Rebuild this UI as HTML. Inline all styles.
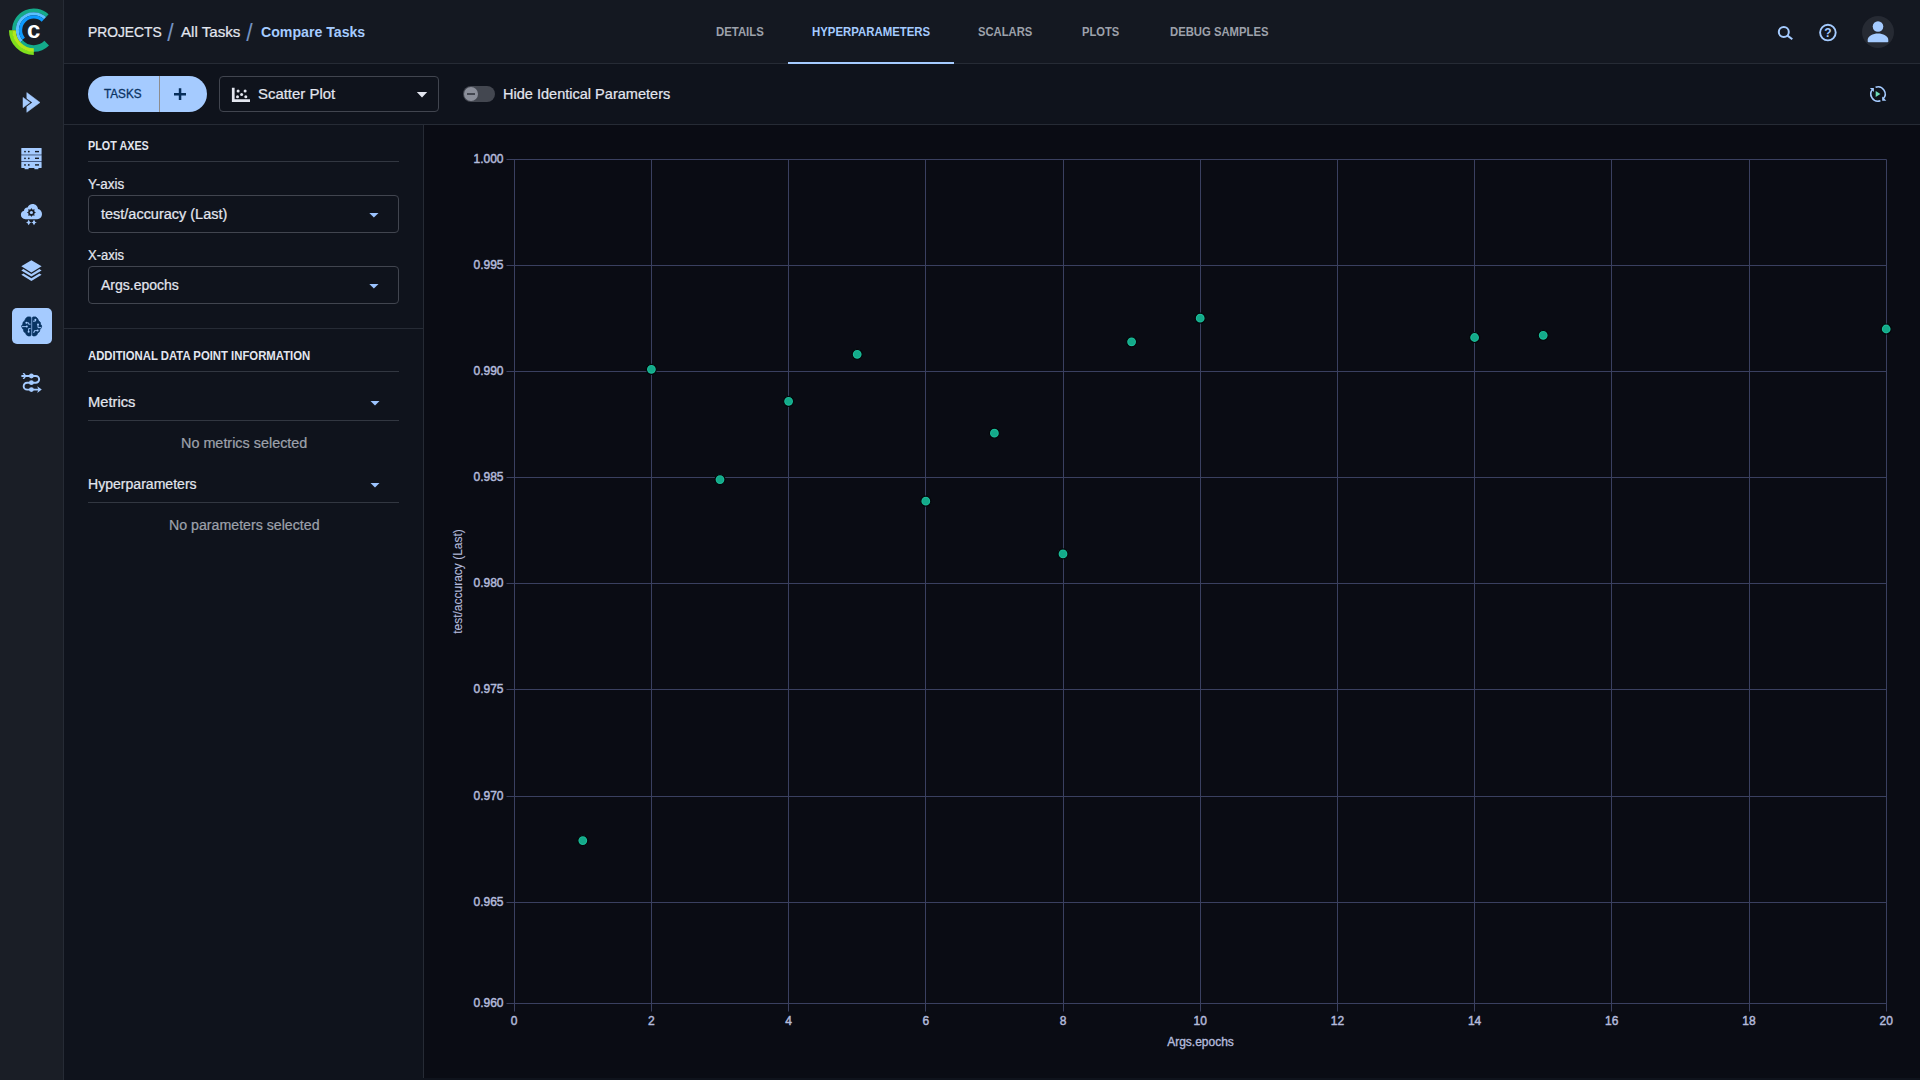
<!DOCTYPE html>
<html lang="en">
<head>
<meta charset="utf-8">
<title>Compare Tasks - Hyperparameters</title>
<style>
*{box-sizing:border-box;margin:0;padding:0}
html,body{width:1920px;height:1080px;overflow:hidden;background:#0f131c;}
body{font-family:"Liberation Sans",sans-serif;color:#e3e6ef;position:relative;}
.abs{position:absolute;white-space:nowrap;line-height:1;transform-origin:left top;transform:scaleX(var(--sx,1))}
#sidebar{position:absolute;left:0;top:0;width:64px;height:1080px;background:#1a1e26;border-right:1px solid #262b35}
#header{position:absolute;left:64px;top:0;width:1856px;height:64px;background:#141821;border-bottom:1px solid #262b35}
#toolbar{position:absolute;left:64px;top:64px;width:1856px;height:61px;background:#0f131c;border-bottom:1px solid #262b35}
#panel{position:absolute;left:64px;top:125px;width:360px;height:955px;background:#0f131c}
#pborder{position:absolute;left:423px;top:125px;width:1px;height:953px;background:#262b35}
#plot{position:absolute;left:424px;top:125px;width:1496px;height:953px;background:#0a0c14}
#underline{position:absolute;left:788px;top:62px;width:166px;height:2px;background:#a5cbff}
.hr{position:absolute;height:1px;background:#323741}
.sel{position:absolute;left:88px;width:311px;height:38px;border:1px solid #41454f;border-radius:4px}
svg{position:absolute;overflow:visible}
svg text{font-family:"Liberation Sans",sans-serif}
</style>
</head>
<body>
<div id="sidebar"></div>
<div id="header"></div>
<div id="toolbar"></div>
<div id="panel"></div>
<div id="plot"></div>
<div id="pborder"></div>


<!-- tabs -->
<div id="underline"></div>

<!-- toolbar -->
<div class="abs" id="pill" style="left:88px;top:76px;width:119px;height:36px;border-radius:18px;background:#a5cbff"></div>
<div class="abs" style="left:159px;top:76px;width:1px;height:36px;background:#8d8c8e"></div>

<div class="abs" style="left:219px;top:76px;width:220px;height:36px;border:1px solid #41454f;border-radius:4px"></div>

<div class="abs" style="left:463px;top:86px;width:32px;height:16px;border-radius:8px;background:#434750"></div>
<div class="abs" style="left:464px;top:87px;width:14px;height:14px;border-radius:7px;background:#8b8f9a"></div>
<div class="abs" style="left:467px;top:93px;width:8px;height:2px;background:#434750"></div>

<!-- left panel -->
<div class="hr" style="left:88px;top:161px;width:311px"></div>
<div class="sel" style="top:195px"></div>
<div class="sel" style="top:266px"></div>
<div class="hr" style="left:64px;top:328px;width:359px;background:#262b35"></div>
<div class="hr" style="left:88px;top:371px;width:311px"></div>
<div class="hr" style="left:88px;top:420px;width:311px"></div>
<div class="hr" style="left:88px;top:502px;width:311px"></div>


<!-- texts -->
<div class="abs" id="bc1" style="--sx:0.9215;left:87.58px;top:24.00px;font-size:15px;color:#e3e6ef;-webkit-text-stroke:0.22px currentColor">PROJECTS</div>
<div class="abs" id="bc2" style="--sx:1.0000;left:167.20px;top:21.70px;font-size:23px;color:#7592c2">/</div>
<div class="abs" id="bc3" style="--sx:1.0089;left:181.30px;top:24.00px;font-size:15px;color:#e3e6ef;-webkit-text-stroke:0.22px currentColor">All Tasks</div>
<div class="abs" id="bc4" style="--sx:1.0000;left:246.30px;top:21.70px;font-size:23px;color:#7592c2">/</div>
<div class="abs" id="bc5" style="--sx:0.9423;left:260.60px;top:24.00px;font-size:15px;color:#a5cbff;font-weight:bold">Compare Tasks</div>
<div class="abs" id="tab1" style="--sx:0.9477;left:716.10px;top:26.00px;font-size:12px;color:#9da1ab;font-weight:bold">DETAILS</div>
<div class="abs" id="tab2" style="--sx:0.9497;left:811.70px;top:26.00px;font-size:12px;color:#a5cbff;font-weight:bold">HYPERPARAMETERS</div>
<div class="abs" id="tab3" style="--sx:0.9362;left:977.70px;top:26.00px;font-size:12px;color:#9da1ab;font-weight:bold">SCALARS</div>
<div class="abs" id="tab4" style="--sx:0.9300;left:1082.30px;top:26.00px;font-size:12px;color:#9da1ab;font-weight:bold">PLOTS</div>
<div class="abs" id="tab5" style="--sx:0.9410;left:1169.80px;top:26.00px;font-size:12px;color:#9da1ab;font-weight:bold">DEBUG SAMPLES</div>
<div class="abs" id="tasks" style="--sx:0.9753;left:104.20px;top:88.00px;font-size:12px;color:#0b3363;-webkit-text-stroke:0.3px #0b3363">TASKS</div>
<div class="abs" id="scatter" style="--sx:0.9953;left:258.00px;top:86.00px;font-size:15px;color:#e3e6ef;-webkit-text-stroke:0.22px currentColor">Scatter Plot</div>
<div class="abs" id="hide" style="--sx:0.9691;left:502.63px;top:86.00px;font-size:15px;color:#e3e6ef;-webkit-text-stroke:0.22px currentColor">Hide Identical Parameters</div>
<div class="abs" id="plotaxes" style="--sx:0.8999;left:88.20px;top:140.00px;font-size:12px;color:#e3e6ef;font-weight:bold">PLOT AXES</div>
<div class="abs" id="yaxis" style="--sx:0.9598;left:88.30px;top:177.00px;font-size:14px;color:#e3e6ef;-webkit-text-stroke:0.22px currentColor">Y-axis</div>
<div class="abs" id="ysel" style="--sx:1.0338;left:101.10px;top:207.00px;font-size:14px;color:#e3e6ef;-webkit-text-stroke:0.22px currentColor">test/accuracy (Last)</div>
<div class="abs" id="xaxis" style="--sx:0.9281;left:88.30px;top:248.00px;font-size:14px;color:#e3e6ef;-webkit-text-stroke:0.22px currentColor">X-axis</div>
<div class="abs" id="xsel" style="--sx:0.9997;left:101.10px;top:278.00px;font-size:14px;color:#e3e6ef;-webkit-text-stroke:0.22px currentColor">Args.epochs</div>
<div class="abs" id="addl" style="--sx:0.9443;left:88.30px;top:350.00px;font-size:12px;color:#e3e6ef;font-weight:bold">ADDITIONAL DATA POINT INFORMATION</div>
<div class="abs" id="metrics" style="--sx:1.0496;left:88.05px;top:395.00px;font-size:14px;color:#e3e6ef;-webkit-text-stroke:0.22px currentColor">Metrics</div>
<div class="abs" id="nometrics" style="--sx:1.0277;left:181.27px;top:436.00px;font-size:14px;color:#9da1ab;-webkit-text-stroke:0.22px currentColor">No metrics selected</div>
<div class="abs" id="hyper" style="--sx:1.0042;left:88.10px;top:477.00px;font-size:14px;color:#e3e6ef;-webkit-text-stroke:0.22px currentColor">Hyperparameters</div>
<div class="abs" id="noparams" style="--sx:1.0127;left:169.19px;top:518.00px;font-size:14px;color:#9da1ab;-webkit-text-stroke:0.22px currentColor">No parameters selected</div>
<!-- ICONS OVERLAY -->
<svg id="icons" width="1920" height="1080" style="left:0;top:0" viewBox="0 0 1920 1080">
<!-- logo -->
<g id="logo" fill="none">
<path d="M13.95,30.20 A19.85,19.85 0 0 1 47.34,15.68" stroke="#14aa8a" stroke-width="3.7"/>
<path d="M21.58,41.21 A16.45,16.45 0 0 1 45.02,18.17" stroke="#5ac0ff" stroke-width="3.1"/>
<path d="M23.65,38.72 A13.25,13.25 0 0 1 42.84,20.51" stroke="#0d9aff" stroke-width="3.3"/>
<path d="M46.70,43.10 A18.25,18.25 0 0 1 20.24,42.41" stroke="#14aa8a" stroke-width="6.5"/>
<path d="M33.80,53.20 A23.0,23.0 0 0 1 10.80,30.20" stroke="#80e01c" stroke-width="3.7"/>
<path d="M33.80,49.95 A19.75,19.75 0 0 1 14.05,30.20" stroke="#b2e81c" stroke-width="3.5"/>
</g>
<text x="33.6" y="37.9" text-anchor="middle" font-size="24" font-weight="bold" fill="#ffffff">c</text>

<!-- nav 1: double arrow -->
<g id="nav1">
<path d="M26.8,92.6 L40,102.45 L26.8,112.3 Z" fill="#a5cbff" stroke="#a5cbff" stroke-width="0.5" stroke-linejoin="round"/>
<path d="M23,97.4 L30.1,102.5 L23,107.7 Z" fill="#a5cbff" stroke="#1a1e26" stroke-width="2.4" stroke-linejoin="miter"/>
<path d="M23,97.4 L30.1,102.5 L23,107.7 Z" fill="#a5cbff" stroke="#a5cbff" stroke-width="0.5" stroke-linejoin="round"/>
</g>

<!-- nav 2: servers -->
<g id="nav2" fill="#a5cbff">
<rect x="21.3" y="148" width="20.3" height="6.4" rx="0.6"/>
<rect x="21.3" y="154.4" width="20.3" height="1" fill="#7b9fd2"/>
<rect x="21.3" y="155.4" width="20.3" height="5.7"/>
<rect x="21.3" y="161.1" width="20.3" height="0.8" fill="#50699a"/>
<rect x="21.3" y="161.9" width="20.3" height="6.2" rx="0.6"/>
<rect x="24.6" y="168" width="4" height="1.2"/>
<rect x="34.4" y="168" width="4" height="1.2"/>
<g fill="#1a1e26">
<circle cx="25" cy="151.6" r="0.9"/><circle cx="28.8" cy="151.6" r="0.9"/><rect x="35" y="150.9" width="4" height="1.4"/>
<circle cx="25" cy="158.3" r="0.9"/><circle cx="28.8" cy="158.3" r="0.9"/><rect x="35" y="157.6" width="4" height="1.4"/>
<circle cx="25" cy="164.9" r="0.9"/><circle cx="28.8" cy="164.9" r="0.9"/><rect x="35" y="164.2" width="4" height="1.4"/>
</g>
</g>

<!-- nav 3: cloud gear -->
<g id="nav3">
<path d="M25.5,219.2 C22.6,219.2 20.9,217.2 20.9,214.8 C20.9,212.7 22.3,211.2 24,210.8 C24,208.6 25.8,207.2 27.6,207.4 C28.4,205.3 30.3,204 32.6,204 C35.6,204 37.8,206.2 38,209 C40.4,209.4 42,211.3 42,214 C42,217 39.9,219.2 37.2,219.2 Z" fill="#a5cbff"/>
<g fill="#1a1e26">
<circle cx="31.4" cy="212.5" r="3.1"/>
<path d="M31.4,207.9 l1.1,2 h-2.2z M31.4,217.1 l1.1,-2 h-2.2z M26.8,212.5 l2,1.1 v-2.2z M36,212.5 l-2,1.1 v-2.2z M28.15,209.25 l2.2,0.6 l-1.6,1.6z M34.65,209.25 l-2.2,0.6 l1.6,1.6z M28.15,215.75 l2.2,-0.6 l-1.6,-1.6z M34.65,215.75 l-2.2,-0.6 l1.6,-1.6z"/>
</g>
<circle cx="31.4" cy="212.5" r="1.6" fill="#a5cbff"/>
<path d="M28.7,219.8 L30,221.9 L31.6,222.5 L30,223.1 L28.7,225.2 L27.4,223.1 L25.8,222.5 L27.4,221.9 Z" fill="#a5cbff"/>
<path d="M34,219.8 L35.3,221.9 L36.9,222.5 L35.3,223.1 L34,225.2 L32.7,223.1 L31.1,222.5 L32.7,221.9 Z" fill="#a5cbff"/>
</g>

<!-- nav 4: layers -->
<g id="nav4" fill="#a5cbff">
<path d="M21.3,266.3 L31.4,260.2 L41.6,266.3 L31.4,272.4 Z"/>
<path d="M21.3,270.4 L23.4,269.1 L31.4,273.9 L39.4,269.1 L41.6,270.4 L31.4,276.6 Z"/>
<path d="M21.3,274.7 L23.4,273.4 L31.4,278.2 L39.4,273.4 L41.6,274.7 L31.4,280.9 Z"/>
</g>

<!-- nav 5: brain active -->
<g id="nav5">
<rect x="12" y="308" width="40" height="36" rx="5" fill="#a5cbff"/>
<g fill="#083463" stroke="#083463" stroke-width="0.7" stroke-linejoin="round">
<path d="M31.0,317.5 L30.2,316.9 L27.4,316.9 L25.7,318.6 L24.6,320.9 L23.0,322.3 L22.8,324.2 L21.5,326.0 L22.3,328.2 L23.4,329.6 L23.9,331.8 L25.6,333.1 L26.5,335.0 L28.2,335.9 L30.2,335.9 L31.0,335.3 Z"/>
<path d="M32.3,317.5 L33.1,316.9 L35.9,316.9 L37.6,318.6 L38.7,320.9 L40.3,322.3 L40.5,324.2 L41.8,326.0 L41.0,328.2 L39.9,329.6 L39.4,331.8 L37.7,333.1 L36.8,335.0 L35.1,335.9 L33.1,335.9 L32.3,335.3 Z"/>
</g>
<g stroke="#a5cbff" stroke-width="0.9" fill="none">
<path d="M26.2,322.8 H28.6 V324.2 H30.6"/>
<path d="M22,326.6 H26.6"/>
<path d="M30.6,328.6 H28.6 V331.6"/>
<path d="M33,321.2 H35.4 V320"/>
<path d="M38,324.8 V327.6 H41"/>
<path d="M33,332.2 H34.4 V330.6 H37.4"/>
</g>
<g fill="#a5cbff">
<circle cx="26.4" cy="322.8" r="1"/><circle cx="26.8" cy="326.6" r="1"/><circle cx="28.6" cy="331.8" r="1"/>
<circle cx="35.4" cy="319.8" r="1"/><circle cx="38" cy="324.6" r="1"/><circle cx="37.6" cy="330.6" r="1"/>
</g>
</g>

<!-- nav 6: pipelines -->
<g id="nav6">
<path d="M21.4,376 H35.8 A3.35,3.35 0 0 1 35.8,382.7 H27.1 A3.45,3.45 0 0 0 27.1,389.6 H40" fill="none" stroke="#a5cbff" stroke-width="1.9"/>
<circle cx="31.4" cy="376" r="2.4" fill="#a5cbff"/>
<circle cx="31.4" cy="382.7" r="2.4" fill="#a5cbff"/>
<circle cx="31.4" cy="389.6" r="2.4" fill="#a5cbff"/>
<path d="M37.2,386.3 L41.8,389.6 L37.2,392.9 L38.4,389.6 Z" fill="#a5cbff"/>
<path d="M22.6,373 L24.2,373 L26.6,376 L24.2,379 L22.6,379 L24.6,376 Z" fill="#a5cbff"/>
</g>

<!-- search -->
<g id="search" fill="none" stroke="#a5cbff" stroke-width="2">
<circle cx="1783.8" cy="31.9" r="5"/>
<path d="M1787.5,35.6 L1792.3,39.3" stroke-linecap="butt"/>
</g>
<!-- help -->
<circle cx="1827.9" cy="32.6" r="7.8" fill="none" stroke="#a5cbff" stroke-width="1.9"/>
<text x="1827.9" y="37" text-anchor="middle" font-size="12" font-weight="bold" fill="#a5cbff">?</text>
<!-- avatar -->
<circle cx="1878" cy="32" r="16" fill="#262a33"/>
<path d="M1868.5,42.2 Q1867.7,42.2 1867.7,41.4 V39.8 C1867.7,36 1873,33.5 1878,33.5 S1888.3,36 1888.3,39.8 V41.4 Q1888.3,42.2 1887.5,42.2 Z" fill="#a5cbff"/>
<circle cx="1878" cy="26.5" r="6.4" fill="#262a33"/>
<circle cx="1878" cy="26.5" r="5.3" fill="#a5cbff"/>
<!-- refresh -->
<g id="refresh" fill="none" stroke="#a5cbff" stroke-width="1.6">
<path d="M1875.57,87.33 A7.1,7.1 0 0 1 1883.02,99.02"/>
<path d="M1880.43,100.67 A7.1,7.1 0 0 1 1872.98,88.98"/>
</g>
<path d="M1882,97.2 L1886.2,97.2 L1886.2,100.9 L1882,100.9 Z" fill="none"/>
<path d="M1882.2,100.8 L1882.2,96.6 L1886.3,100.8 Z" fill="#a5cbff"/>
<path d="M1873.85,88 L1873.85,92 L1869.85,88 Z" fill="#a5cbff"/>
<path d="M1875.7,90.9 L1880.4,94 L1875.7,97.1 Z" fill="#6fdcb9"/>

<!-- plus -->
<path d="M174,92.9 H186 V95.4 H174 Z M178.8,88.2 H181.3 V100 H178.8 Z" fill="#062e5a"/>
<!-- carets -->
<path d="M416.8,92.1 H427.2 L422,97.4 Z" fill="#e3e6ef"/>
<g fill="#9cc4ff">
<path d="M369.3,212.9 H378.5 L373.9,217.5 Z"/>
<path d="M369.3,283.9 H378.5 L373.9,288.5 Z"/>
<path d="M370.5,400.9 H379.5 L375,405.4 Z"/>
<path d="M370.5,482.9 H379.5 L375,487.4 Z"/>
</g>
<!-- scatter icon -->
<g id="scicon" fill="#e3e6ef">
<path d="M231.9,87.7 H234.6 V99.2 H250 V101.9 H231.9 Z"/>
<circle cx="238.1" cy="90.9" r="1.5"/><circle cx="245.1" cy="90.9" r="1.5"/><circle cx="241.6" cy="94.4" r="1.5"/><circle cx="237.5" cy="96.7" r="1.5"/><circle cx="245.8" cy="96.7" r="1.5"/>
</g>
</svg>

<!-- PLOT SVG -->
<svg id="chart" width="1496" height="955" style="left:424px;top:125px" viewBox="424 125 1496 955">
<line x1="506.5" y1="159.5" x2="1886.5" y2="159.5" stroke="#3a4060" stroke-width="1"/>
<line x1="506.5" y1="265.5" x2="1886.5" y2="265.5" stroke="#3a4060" stroke-width="1"/>
<line x1="506.5" y1="371.5" x2="1886.5" y2="371.5" stroke="#3a4060" stroke-width="1"/>
<line x1="506.5" y1="477.5" x2="1886.5" y2="477.5" stroke="#3a4060" stroke-width="1"/>
<line x1="506.5" y1="583.5" x2="1886.5" y2="583.5" stroke="#3a4060" stroke-width="1"/>
<line x1="506.5" y1="689.5" x2="1886.5" y2="689.5" stroke="#3a4060" stroke-width="1"/>
<line x1="506.5" y1="796.5" x2="1886.5" y2="796.5" stroke="#3a4060" stroke-width="1"/>
<line x1="506.5" y1="902.5" x2="1886.5" y2="902.5" stroke="#3a4060" stroke-width="1"/>
<line x1="506.5" y1="1003.5" x2="1886.5" y2="1003.5" stroke="#3a4060" stroke-width="1"/>
<line x1="514.5" y1="159.5" x2="514.5" y2="1011.5" stroke="#3a4060" stroke-width="1"/>
<line x1="651.5" y1="159.5" x2="651.5" y2="1011.5" stroke="#3a4060" stroke-width="1"/>
<line x1="788.5" y1="159.5" x2="788.5" y2="1011.5" stroke="#3a4060" stroke-width="1"/>
<line x1="925.5" y1="159.5" x2="925.5" y2="1011.5" stroke="#3a4060" stroke-width="1"/>
<line x1="1063.5" y1="159.5" x2="1063.5" y2="1011.5" stroke="#3a4060" stroke-width="1"/>
<line x1="1200.5" y1="159.5" x2="1200.5" y2="1011.5" stroke="#3a4060" stroke-width="1"/>
<line x1="1337.5" y1="159.5" x2="1337.5" y2="1011.5" stroke="#3a4060" stroke-width="1"/>
<line x1="1474.5" y1="159.5" x2="1474.5" y2="1011.5" stroke="#3a4060" stroke-width="1"/>
<line x1="1611.5" y1="159.5" x2="1611.5" y2="1011.5" stroke="#3a4060" stroke-width="1"/>
<line x1="1749.5" y1="159.5" x2="1749.5" y2="1011.5" stroke="#3a4060" stroke-width="1"/>
<line x1="1886.5" y1="159.5" x2="1886.5" y2="1011.5" stroke="#3a4060" stroke-width="1"/>
<text x="503.5" y="163.0" text-anchor="end" font-size="12" fill="#b4bbdc" stroke="#b4bbdc" stroke-width="0.45">1.000</text>
<text x="503.5" y="269.0" text-anchor="end" font-size="12" fill="#b4bbdc" stroke="#b4bbdc" stroke-width="0.45">0.995</text>
<text x="503.5" y="375.0" text-anchor="end" font-size="12" fill="#b4bbdc" stroke="#b4bbdc" stroke-width="0.45">0.990</text>
<text x="503.5" y="481.0" text-anchor="end" font-size="12" fill="#b4bbdc" stroke="#b4bbdc" stroke-width="0.45">0.985</text>
<text x="503.5" y="587.0" text-anchor="end" font-size="12" fill="#b4bbdc" stroke="#b4bbdc" stroke-width="0.45">0.980</text>
<text x="503.5" y="693.0" text-anchor="end" font-size="12" fill="#b4bbdc" stroke="#b4bbdc" stroke-width="0.45">0.975</text>
<text x="503.5" y="800.0" text-anchor="end" font-size="12" fill="#b4bbdc" stroke="#b4bbdc" stroke-width="0.45">0.970</text>
<text x="503.5" y="906.0" text-anchor="end" font-size="12" fill="#b4bbdc" stroke="#b4bbdc" stroke-width="0.45">0.965</text>
<text x="503.5" y="1007.0" text-anchor="end" font-size="12" fill="#b4bbdc" stroke="#b4bbdc" stroke-width="0.45">0.960</text>
<text x="514.2" y="1025" text-anchor="middle" font-size="12" fill="#b4bbdc" stroke="#b4bbdc" stroke-width="0.45">0</text>
<text x="651.4" y="1025" text-anchor="middle" font-size="12" fill="#b4bbdc" stroke="#b4bbdc" stroke-width="0.45">2</text>
<text x="788.6" y="1025" text-anchor="middle" font-size="12" fill="#b4bbdc" stroke="#b4bbdc" stroke-width="0.45">4</text>
<text x="925.8" y="1025" text-anchor="middle" font-size="12" fill="#b4bbdc" stroke="#b4bbdc" stroke-width="0.45">6</text>
<text x="1063.0" y="1025" text-anchor="middle" font-size="12" fill="#b4bbdc" stroke="#b4bbdc" stroke-width="0.45">8</text>
<text x="1200.2" y="1025" text-anchor="middle" font-size="12" fill="#b4bbdc" stroke="#b4bbdc" stroke-width="0.45">10</text>
<text x="1337.4" y="1025" text-anchor="middle" font-size="12" fill="#b4bbdc" stroke="#b4bbdc" stroke-width="0.45">12</text>
<text x="1474.6" y="1025" text-anchor="middle" font-size="12" fill="#b4bbdc" stroke="#b4bbdc" stroke-width="0.45">14</text>
<text x="1611.8" y="1025" text-anchor="middle" font-size="12" fill="#b4bbdc" stroke="#b4bbdc" stroke-width="0.45">16</text>
<text x="1749.0" y="1025" text-anchor="middle" font-size="12" fill="#b4bbdc" stroke="#b4bbdc" stroke-width="0.45">18</text>
<text x="1886.2" y="1025" text-anchor="middle" font-size="12" fill="#b4bbdc" stroke="#b4bbdc" stroke-width="0.45">20</text>
<text x="1200.5" y="1046" text-anchor="middle" font-size="12" fill="#b4bbdc" stroke="#b4bbdc" stroke-width="0.35">Args.epochs</text>
<text transform="translate(461.8,581.5) rotate(-90)" text-anchor="middle" font-size="12" fill="#b4bbdc" stroke="#b4bbdc" stroke-width="0.12">test/accuracy (Last)</text>
<circle cx="582.8" cy="840.6" r="5" fill="#1bbd99" stroke="#04060a" stroke-width="1.2"/><circle cx="582.8" cy="840.6" r="3.3" fill="#14aa8a"/>
<circle cx="651.4" cy="369.3" r="5" fill="#1bbd99" stroke="#04060a" stroke-width="1.2"/><circle cx="651.4" cy="369.3" r="3.3" fill="#14aa8a"/>
<circle cx="720.0" cy="479.6" r="5" fill="#1bbd99" stroke="#04060a" stroke-width="1.2"/><circle cx="720.0" cy="479.6" r="3.3" fill="#14aa8a"/>
<circle cx="788.6" cy="401.3" r="5" fill="#1bbd99" stroke="#04060a" stroke-width="1.2"/><circle cx="788.6" cy="401.3" r="3.3" fill="#14aa8a"/>
<circle cx="857.2" cy="354.3" r="5" fill="#1bbd99" stroke="#04060a" stroke-width="1.2"/><circle cx="857.2" cy="354.3" r="3.3" fill="#14aa8a"/>
<circle cx="925.8" cy="501.2" r="5" fill="#1bbd99" stroke="#04060a" stroke-width="1.2"/><circle cx="925.8" cy="501.2" r="3.3" fill="#14aa8a"/>
<circle cx="994.4" cy="433.2" r="5" fill="#1bbd99" stroke="#04060a" stroke-width="1.2"/><circle cx="994.4" cy="433.2" r="3.3" fill="#14aa8a"/>
<circle cx="1063.0" cy="553.9" r="5" fill="#1bbd99" stroke="#04060a" stroke-width="1.2"/><circle cx="1063.0" cy="553.9" r="3.3" fill="#14aa8a"/>
<circle cx="1131.6" cy="341.8" r="5" fill="#1bbd99" stroke="#04060a" stroke-width="1.2"/><circle cx="1131.6" cy="341.8" r="3.3" fill="#14aa8a"/>
<circle cx="1200.2" cy="318.2" r="5" fill="#1bbd99" stroke="#04060a" stroke-width="1.2"/><circle cx="1200.2" cy="318.2" r="3.3" fill="#14aa8a"/>
<circle cx="1474.6" cy="337.5" r="5" fill="#1bbd99" stroke="#04060a" stroke-width="1.2"/><circle cx="1474.6" cy="337.5" r="3.3" fill="#14aa8a"/>
<circle cx="1543.2" cy="335.3" r="5" fill="#1bbd99" stroke="#04060a" stroke-width="1.2"/><circle cx="1543.2" cy="335.3" r="3.3" fill="#14aa8a"/>
<circle cx="1886.2" cy="329" r="5" fill="#1bbd99" stroke="#04060a" stroke-width="1.2"/><circle cx="1886.2" cy="329" r="3.3" fill="#14aa8a"/>
</svg>

</body>
</html>
